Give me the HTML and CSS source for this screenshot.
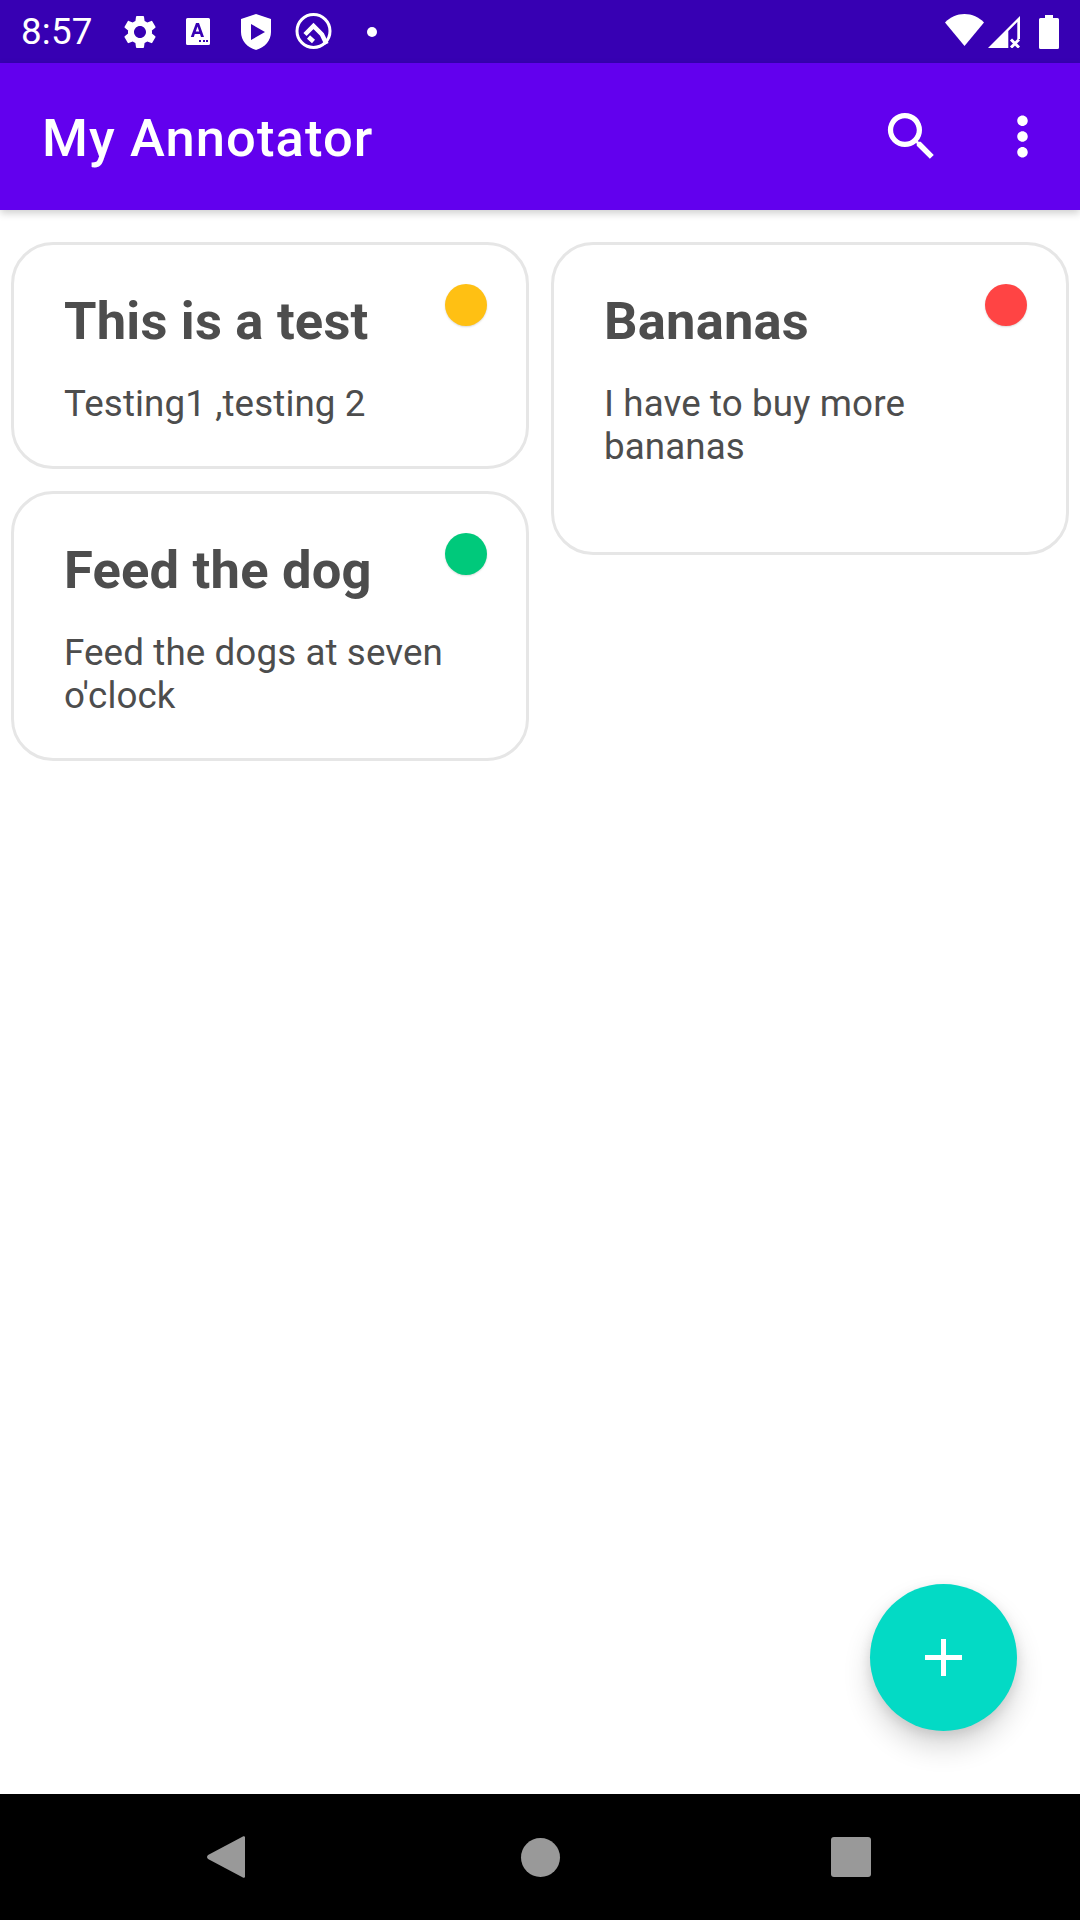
FILE: index.html
```html
<!DOCTYPE html>
<html lang="en">
<head>
  <meta charset="UTF-8">
  <meta name="viewport" content="width=device-width, initial-scale=1.0">
  <title>My Annotator</title>
  <link rel="stylesheet" href="styles.css">
</head>
<body>
<div class="screen">
  <div class="status_bar">
    <span class="clock">8:57</span>
    <svg class="ic_gear" viewBox="0 0 24 24"><path d="M19.14 12.94c.04-.3.06-.61.06-.94 0-.32-.02-.64-.07-.94l2.03-1.58a.49.49 0 0 0 .12-.61l-1.92-3.32a.488.488 0 0 0-.59-.22l-2.39.96c-.5-.38-1.03-.7-1.62-.94l-.36-2.54a.484.484 0 0 0-.48-.41h-3.84c-.24 0-.43.17-.47.41l-.36 2.54c-.59.24-1.13.57-1.62.94l-2.39-.96c-.22-.08-.47 0-.59.22L2.74 8.87c-.12.21-.08.47.12.61l2.03 1.58c-.05.3-.09.63-.09.94s.02.64.07.94l-2.03 1.58a.49.49 0 0 0-.12.61l1.92 3.32c.12.22.37.29.59.22l2.39-.96c.5.38 1.03.7 1.62.94l.36 2.54c.05.24.24.41.48.41h3.84c.24 0 .44-.17.47-.41l.36-2.54c.59-.24 1.13-.56 1.62-.94l2.39.96c.22.08.47 0 .59-.22l1.92-3.32c.12-.22.07-.47-.12-.61l-2.01-1.58zM12 15.6c-1.98 0-3.6-1.62-3.6-3.6s1.62-3.6 3.6-3.6 3.6 1.62 3.6 3.6-1.62 3.6-3.6 3.6z"/></svg>
    <svg class="ic_a" viewBox="0 0 24 27"><path fill-rule="evenodd" d="M1.500 0h21A1.500 1.500 0 0 1 24 1.500v24a1.500 1.500 0 0 1-1.500 1.500h-21A1.500 1.500 0 0 1 0 25.500v-24A1.500 1.500 0 0 1 1.500 0zM10 5 4.800 19h3l1-3h5.200l1 3h3L13 5h-3zm1.500 3.500 1.700 5.100H9.800zM13 22h2v2h-2zm4 0h2v2h-2zm3 0v2h2v-2z"/></svg>
    <svg class="ic_shield" viewBox="0 0 30 36"><path fill-rule="evenodd" d="M15 0 30 5v13c0 8.500-6 15.500-15 18C6 33.500 0 26.500 0 18V5zM10 10v16l14-8z"/></svg>
    <svg class="ic_q" viewBox="0 0 37 37">
      <circle cx="18.500" cy="18" r="16.500" class="q_line"/>
      <path d="M10 21.500 18.500 13 27 21.500 31.500 31M13.500 24 18.500 28.500" class="q_line q_thick"/>
    </svg>
    <span class="status_dot"></span>
    <span class="status_fill"></span>
    <svg class="ic_wifi" viewBox="0 0 39 32"><path d="M0 8.500C5 3.200 12 0 19.500 0S34 3.200 39 8.500L19.500 32z"/></svg>
    <svg class="ic_signal" viewBox="0 0 32 33"><path d="M0 33 32 1v23h-2.700V7l-9 9v17z"/><path d="M23 24.500 31 32.500M31 24.500 23 32.500" class="signal_x"/></svg>
    <svg class="ic_battery" viewBox="0 0 20 34"><path d="M6 0h8v3h4.500A1.500 1.500 0 0 1 20 4.500v28a1.500 1.500 0 0 1-1.500 1.500h-17A1.500 1.500 0 0 1 0 32.500v-28A1.500 1.500 0 0 1 1.500 3H6z"/></svg>
  </div>

  <div class="app_bar">
    <h1 class="app_title">My Annotator</h1>
    <svg class="ic_search" viewBox="0 0 24 24"><path d="M15.500 14h-.79l-.28-.27A6.471 6.471 0 0 0 16 9.500 6.500 6.500 0 1 0 9.500 16c1.610 0 3.090-.59 4.230-1.570l.27.28v.79l5 4.990L20.490 19l-4.990-5zm-6 0C7.010 14 5 11.990 5 9.500S7.010 5 9.500 5 14 7.010 14 9.500 11.990 14 9.500 14z"/></svg>
    <svg class="ic_more" viewBox="0 0 24 24"><path d="M12 8c1.100 0 2-.9 2-2s-.9-2-2-2-2 .9-2 2 .9 2 2 2zm0 2c-1.100 0-2 .9-2 2s.9 2 2 2 2-.9 2-2-.9-2-2-2zm0 6c-1.100 0-2 .9-2 2s.9 2 2 2 2-.9 2-2-.9-2-2-2z"/></svg>
  </div>

  <div class="content">
    <div class="notes">
      <div class="note_col">
        <div class="note note_one">
          <span class="dot dot_yellow"></span>
          <h2 class="note_title">This is a test</h2>
          <p class="note_text">Testing1 ,testing 2</p>
        </div>
        <div class="note note_three">
          <span class="dot dot_green"></span>
          <h2 class="note_title">Feed the dog</h2>
          <p class="note_text">Feed the dogs at seven o'clock</p>
        </div>
      </div>
      <div class="note_col">
        <div class="note note_two">
          <span class="dot dot_red"></span>
          <h2 class="note_title">Bananas</h2>
          <p class="note_text">I have to buy more bananas</p>
        </div>
      </div>
    </div>
    <button class="fab">
      <svg viewBox="0 0 37 37"><path d="M16 0h5v16h16v5H21v16h-5V21H0v-5h16z"/></svg>
    </button>
  </div>

  <div class="nav_bar">
    <svg class="nav_back" viewBox="0 0 36 42" preserveAspectRatio="none"><path d="M34 0.500c1-.6 2 0 2 1v39c0 1-1 1.600-2 1L1 23c-1.300-1-1.300-3 0-4z"/></svg>
    <span class="nav_home"></span>
    <span class="nav_recent"></span>
  </div>
</div>
</body>
</html>
```

FILE: styles.css
```css
*{box-sizing: border-box;}
html, body{margin: 0; padding: 0;}
body{background: #fff; font-family: Roboto, "Noto Sans", sans-serif;}
svg{fill: #fff; display: block; flex: none;}

.screen{width: 1080px; height: 1920px; display: flex; flex-direction: column; overflow: hidden;}

/* status bar */
.status_bar{height: 63px; background: #3700b3; display: flex; align-items: center; padding: 0 21px;}
.clock{color: #fff; font-size: 36.75px; width: 85px; letter-spacing: 0.2px;}
.ic_gear{width: 40px; height: 40px; margin: 0 0 0 14px;}
.ic_a{width: 24px; height: 27px; margin-left: 26px;}
.ic_shield{width: 30px; height: 36px; margin-left: 31px;}
.ic_q{width: 37px; height: 37px; margin-left: 24px;}
.q_line{fill: none; stroke: #fff; stroke-width: 3;}
.q_thick{stroke-width: 4.5;}
.status_dot{width: 10px; height: 10px; border-radius: 50%; background: #fff; margin-left: 35px;}
.status_fill{flex: 1;}
.ic_wifi{width: 39px; height: 32px; margin-top: -3px;}
.ic_signal{width: 32px; height: 33px; margin-left: 4px;}
.signal_x{fill: none; stroke: #fff; stroke-width: 3;}
.ic_battery{width: 20px; height: 34px; margin-left: 19px;}

/* app bar */
.app_bar{height: 147px; background: #6200ee; display: flex; align-items: center; padding: 0 0 0 42px; box-shadow: 0 3px 8px rgba(0,0,0,0.2); position: relative;}
.app_title{flex: 1; margin: 0; padding-top: 2px; color: #fff; font-size: 52.5px; font-weight: 500; letter-spacing: 1.1px;}
.ic_search{width: 63px; height: 63px; margin-right: 48px;}
.ic_more{width: 63px; height: 63px; margin-right: 26px;}

/* notes */
.content{flex: 1; position: relative;}
.notes{display: flex; align-items: flex-start; gap: 22px; padding: 32px 11px 0;}
.note_col{flex: 1; display: flex; flex-direction: column; gap: 22px;}
.note{position: relative; border: 3px solid #e6e6e6; border-radius: 42px; padding: 45px 39px 0 50px; color: #4d4d4d;}
.note_one{height: 227px;}
.note_two{height: 313px;}
.note_three{height: 270px;}
.note_title{margin: 0; font-size: 52.5px; font-weight: 700; line-height: 62px; letter-spacing: 0.2px;}
.note_text{margin: 30px 0 0; font-size: 36.75px; line-height: 43px; font-weight: 400; letter-spacing: 0.1px;}
.dot{position: absolute; top: 39px; right: 39px; width: 42px; height: 42px; border-radius: 50%; box-shadow: 0 1px 2px rgba(0,0,0,0.15);}
.dot_yellow{background: #ffc013;}
.dot_green{background: #00c97b;}
.dot_red{background: #ff4444;}

.fab{position: absolute; left: 870px; top: 1374px; width: 147px; height: 147px; border: 0; padding: 0; border-radius: 50%; background: #03dac5; box-shadow: 0 16px 28px rgba(0,0,0,0.16), 0 4px 12px rgba(0,0,0,0.1); display: flex; align-items: center; justify-content: center;}
.fab svg{width: 37px; height: 37px;}

/* nav bar */
.nav_bar{height: 126px; background: #000; display: flex; align-items: center; position: relative;}
.nav_back{width: 38px; height: 42px; fill: #999; margin-left: 207px;}
.nav_home{width: 39px; height: 39px; border-radius: 50%; background: #999; margin-left: 276px;}
.nav_recent{width: 40px; height: 40px; border-radius: 3px; background: #999; margin-left: 271px;}
```
